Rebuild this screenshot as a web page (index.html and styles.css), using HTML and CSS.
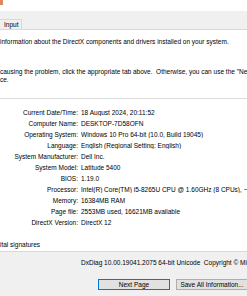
FILE: index.html
```html
<!DOCTYPE html>
<html lang="en">
<head>
    <meta charset="UTF-8">
    <meta name="viewport" content="width=device-width, initial-scale=1.0">
    <title>DirectX Diagnostic Tool</title>
    <link rel="stylesheet" href="styles.css">
</head>
<body>
    <div class="window">
        <div class="titlebar">
            <span class="app-icon"></span>
        </div>

        <!-- Tabs -->
        <div class="tabs">
            <div class="tab">Input</div>
        </div>

        <div class="page">
            <p class="intro intro-first">information about the DirectX components and drivers installed on your system.</p>
            <p class="intro intro-second">causing the problem, click the appropriate tab above.&nbsp; Otherwise, you can use the "Next Page" button below to visit each page in sequence.</p>
            <p class="intro">ce.</p>

            <!-- System Information -->
            <div class="group">
                <div class="info-grid">
                    <span class="label">Current Date/Time:</span><span class="value">18 August 2024, 20:11:52</span>
                    <span class="label">Computer Name:</span><span class="value">DESKTOP-7D58OFN</span>
                    <span class="label">Operating System:</span><span class="value">Windows 10 Pro 64-bit (10.0, Build 19045)</span>
                    <span class="label">Language:</span><span class="value">English (Regional Setting: English)</span>
                    <span class="label">System Manufacturer:</span><span class="value">Dell Inc.</span>
                    <span class="label">System Model:</span><span class="value">Latitude 5400</span>
                    <span class="label">BIOS:</span><span class="value">1.19.0</span>
                    <span class="label">Processor:</span><span class="value">Intel(R) Core(TM) i5-8265U CPU @ 1.60GHz (8 CPUs), ~1.8GHz</span>
                    <span class="label">Memory:</span><span class="value">16384MB RAM</span>
                    <span class="label">Page file:</span><span class="value">2553MB used, 16621MB available</span>
                    <span class="label">DirectX Version:</span><span class="value">DirectX 12</span>
                </div>
            </div>

            <p class="check">ital signatures</p>
        </div>

        <div class="footer">
            <p class="version">DxDiag 10.00.19041.2075 64-bit Unicode&nbsp; Copyright © Microsoft. All rights reserved.</p>
            <div class="buttons">
                <button class="btn btn-default">Next Page</button>
                <button class="btn">Save All Information...</button>
            </div>
        </div>
    </div>
</body>
</html>
```

FILE: styles.css
```css
/* General Styles */
body {
    margin: 0;
    padding: 0;
    background-color: #f0f0f0;
    font-family: "Liberation Sans", Arial, sans-serif;
    font-size: 6.5px;
    color: #000;
    overflow: hidden;
}

p {
    margin: 0;
}

.window {
    display: flex;
    flex-direction: column;
    width: 247px;
    height: 296px;
    overflow: hidden;
}

.titlebar {
    height: 11px;
    background-color: #fff;
}

.app-icon {
    display: block;
    width: 3px;
    height: 5px;
    background-color: #d98a5a;
}

/* Tabs */
.tabs {
    display: flex;
    align-items: flex-end;
    height: 18px;
}

.tab {
    width: 22px;
    height: 10px;
    line-height: 10px;
    padding-left: 4px;
    box-sizing: border-box;
    background-color: #f0f0f0;
    border-top: 1px solid #d9d9d9;
    border-right: 1px solid #d9d9d9;
}

.page {
    height: 223px;
    box-sizing: border-box;
    padding-top: 8px;
    background-color: #fff;
    border-top: 1px solid #d9d9d9;
    border-bottom: 1px solid #d9d9d9;
}

.intro {
    line-height: 8px;
    white-space: nowrap;
    overflow: hidden;
}

.intro-first {
    margin-bottom: 22px;
}

.group {
    margin-top: 14px;
    padding-top: 8px;
    border-top: 1px solid #dcdcdc;
}

.info-grid {
    display: grid;
    grid-template-columns: 78px 1fr;
    column-gap: 3px;
    grid-auto-rows: 11px;
    align-items: center;
}

.label {
    text-align: right;
    white-space: nowrap;
}

.value {
    white-space: nowrap;
    overflow: hidden;
}

.check {
    margin-top: 12px;
    line-height: 10px;
}

/* Footer */
.footer {
    padding-top: 6px;
}

.version {
    padding-left: 81px;
    line-height: 10px;
    white-space: nowrap;
}

.buttons {
    display: flex;
    gap: 6px;
    margin-top: 11px;
    padding-left: 98px;
}

.btn {
    flex: none;
    width: 72px;
    height: 11px;
    padding: 0;
    font-family: inherit;
    font-size: 6.5px;
    color: #000;
    background-color: #e1e1e1;
    border: 1px solid #adadad;
}

.btn-default {
    border-color: #0078d7;
}
```
